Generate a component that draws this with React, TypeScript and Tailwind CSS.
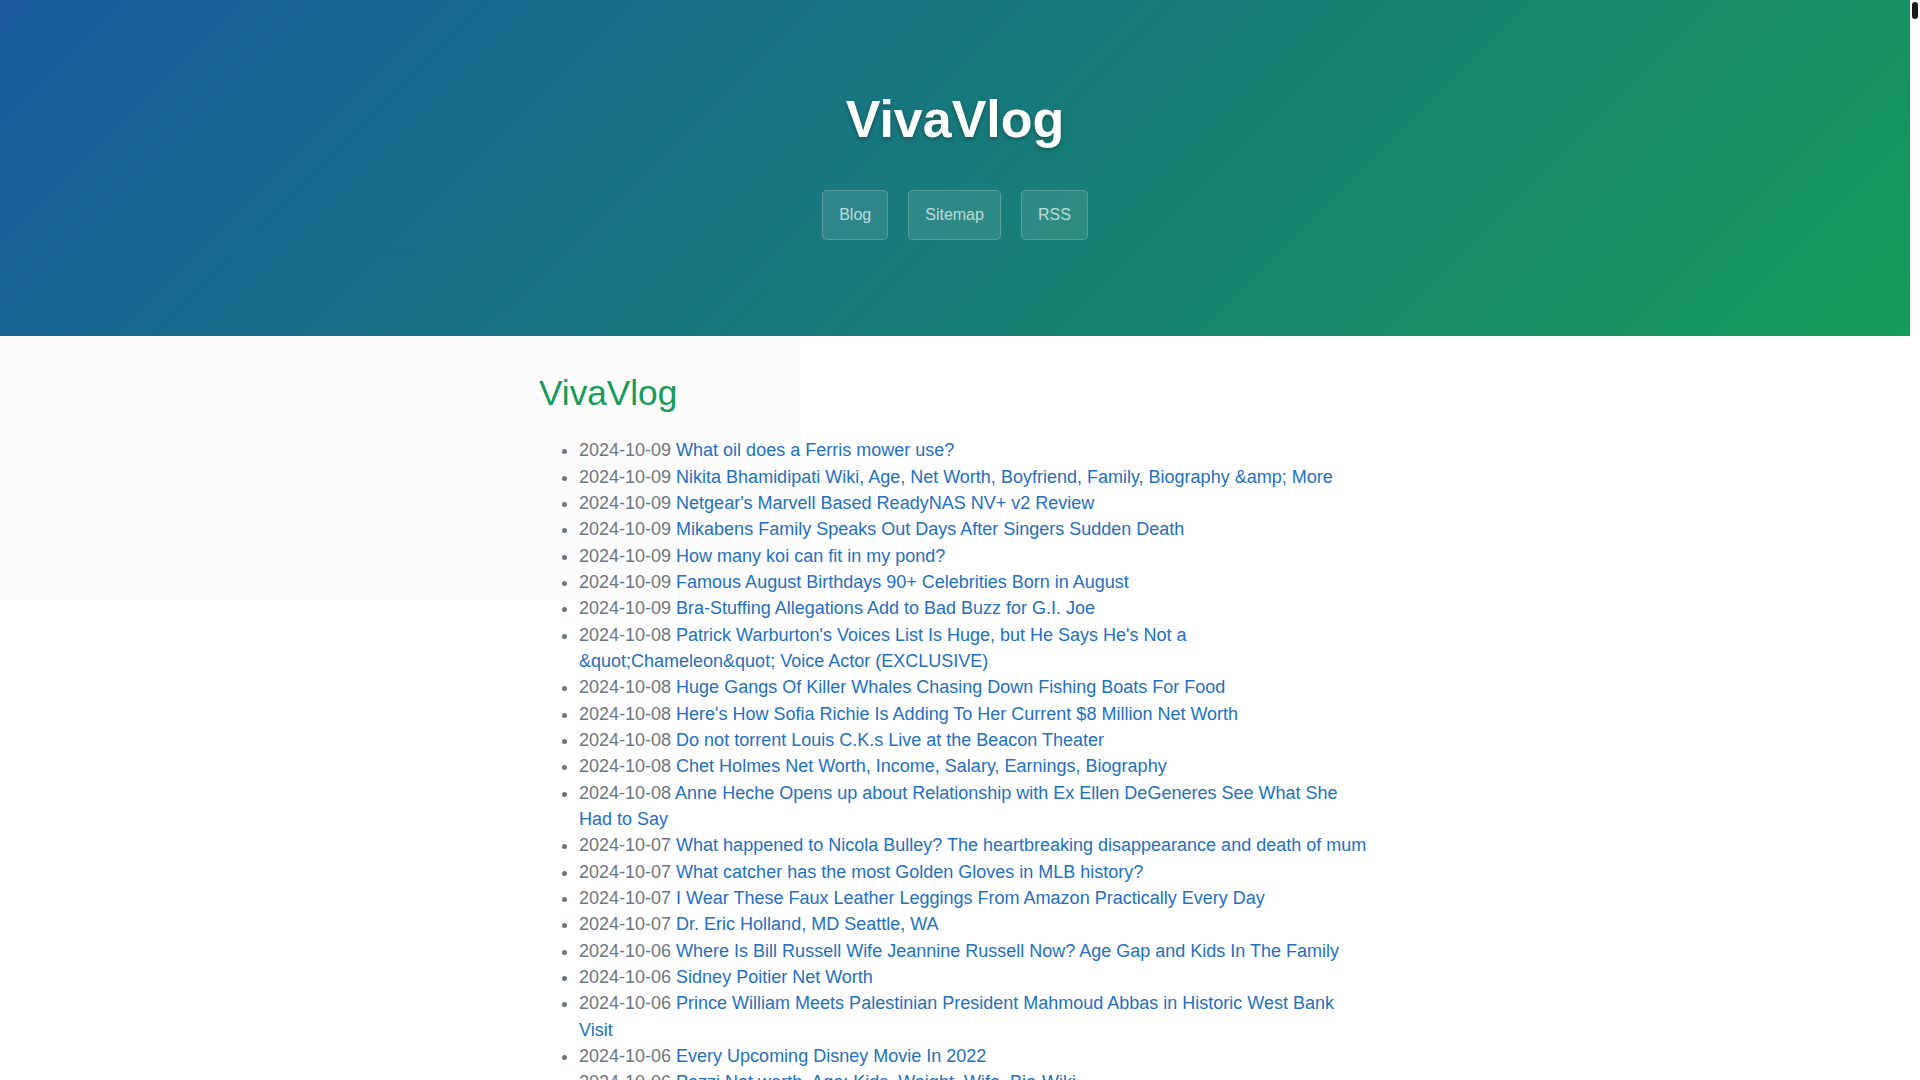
import React from "react";

const posts: [string, string][] = [
  ["2024-10-09", "What oil does a Ferris mower use?"],
  ["2024-10-09", "Nikita Bhamidipati Wiki, Age, Net Worth, Boyfriend, Family, Biography &amp; More"],
  ["2024-10-09", "Netgear's Marvell Based ReadyNAS NV+ v2 Review"],
  ["2024-10-09", "Mikabens Family Speaks Out Days After Singers Sudden Death"],
  ["2024-10-09", "How many koi can fit in my pond?"],
  ["2024-10-09", "Famous August Birthdays 90+ Celebrities Born in August"],
  ["2024-10-09", "Bra-Stuffing Allegations Add to Bad Buzz for G.I. Joe"],
  ["2024-10-08", "Patrick Warburton's Voices List Is Huge, but He Says He's Not a &quot;Chameleon&quot; Voice Actor (EXCLUSIVE)"],
  ["2024-10-08", "Huge Gangs Of Killer Whales Chasing Down Fishing Boats For Food"],
  ["2024-10-08", "Here's How Sofia Richie Is Adding To Her Current $8 Million Net Worth"],
  ["2024-10-08", "Do not torrent Louis C.K.s Live at the Beacon Theater"],
  ["2024-10-08", "Chet Holmes Net Worth, Income, Salary, Earnings, Biography"],
  ["2024-10-08", "Anne Heche Opens up about Relationship with Ex Ellen DeGeneres See What She Had to Say"],
  ["2024-10-07", "What happened to Nicola Bulley? The heartbreaking disappearance and death of mum"],
  ["2024-10-07", "What catcher has the most Golden Gloves in MLB history?"],
  ["2024-10-07", "I Wear These Faux Leather Leggings From Amazon Practically Every Day"],
  ["2024-10-07", "Dr. Eric Holland, MD Seattle, WA"],
  ["2024-10-06", "Where Is Bill Russell Wife Jeannine Russell Now? Age Gap and Kids In The Family"],
  ["2024-10-06", "Sidney Poitier Net Worth"],
  ["2024-10-06", "Prince William Meets Palestinian President Mahmoud Abbas in Historic West Bank Visit"],
  ["2024-10-06", "Every Upcoming Disney Movie In 2022"],
  ["2024-10-06", "Pezzi Net worth, Age: Kids, Weight, Wife, Bio-Wiki"],
  ["2024-10-06", "What is the best time to visit the Grand Canyon?"],
  ["2024-10-05", "How tall is the Eiffel Tower in feet?"],
  ["2024-10-05", "The Best Hiking Trails in Colorado for Beginners"],
];

export default function App() {
  return (
    <div className="relative min-h-screen w-[1910px] bg-white font-['Liberation_Sans',Arial,sans-serif]">
      <header className="bg-[linear-gradient(135deg,#185a9d_0%,#169b58_100%)] pt-[89px] pb-[96px] text-center">
        <h1 className="mb-[40px] text-[52px] font-bold leading-[61px] text-white [text-shadow:0_2px_4px_rgba(0,0,0,0.3)]">
          VivaVlog
        </h1>
        <nav className="flex justify-center gap-5">
          {["Blog", "Sitemap", "RSS"].map((l) => (
            <a
              key={l}
              href="#"
              className="block rounded-[5px] border border-white/20 bg-white/10 px-4 py-3 text-base leading-6 text-white/70"
            >
              {l}
            </a>
          ))}
        </nav>
      </header>
      <main className="relative">
        <div className="absolute left-0 top-0 h-[264px] w-[800px] bg-[#fcfcfc]" />
        <div className="relative mx-auto w-[880px] px-6 pt-[36px] pb-10">
          <h2 className="mb-[23px] text-[35.2px] font-normal leading-[1.2] text-[#169b58]">VivaVlog</h2>
          <ul className="list-disc pl-10 text-[18px] leading-[26.35px] text-[#6c757d]">
            {posts.map(([d, t], i) => (
              <li key={i}>
                {d}{" "}
                <a href="#" className="text-[#236fbf]">
                  {t}
                </a>
              </li>
            ))}
          </ul>
        </div>
      </main>
      <div className="fixed right-[2px] top-[2px] h-[17px] w-[6px] rounded-full bg-[#1a1a1a]" />
    </div>
  );
}
